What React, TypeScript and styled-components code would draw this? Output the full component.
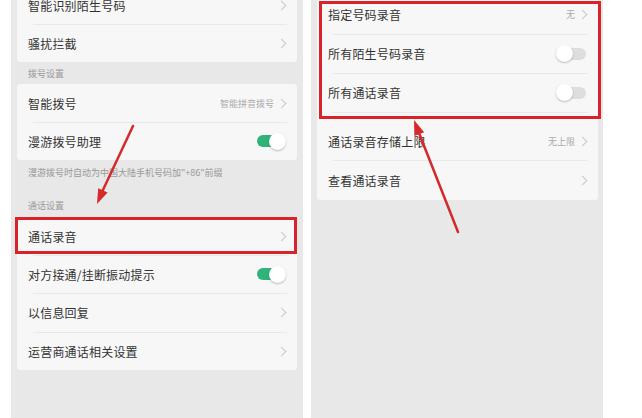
import React from "react";
import styled, { createGlobalStyle } from "styled-components";

const Global = createGlobalStyle`
  html, body { margin: 0; padding: 0; background: #fff; }
  body { font-family: "Noto Sans CJK SC", "Noto Sans", sans-serif; }
`;

const Page = styled.div`
  position: relative;
  width: 642px;
  height: 418px;
  overflow: hidden;
  display: flex;
  background: #fff;
`;

const Phone = styled.div<{ $left: number; $pr: number }>`
  margin-left: ${(p) => p.$left}px;
  width: 292px;
  height: 418px;
  box-sizing: border-box;
  padding: 0 ${(p) => p.$pr}px 0 6px;
  background: #e8e8e8;
  display: flex;
  flex-direction: column;
  overflow: hidden;
`;

const Card = styled.div<{ $mt?: number }>`
  margin-top: ${(p) => p.$mt ?? 0}px;
  background: #f7f7f7;
  border-radius: 3px;
  display: flex;
  flex-direction: column;
`;

const Row = styled.div<{ $h: number; $pt?: number; $divider?: boolean }>`
  position: relative;
  height: ${(p) => p.$h}px;
  box-sizing: border-box;
  padding: ${(p) => p.$pt ?? 0}px 9px 0 11px;
  display: flex;
  align-items: center;
  ${(p) =>
    p.$divider
      ? `&::before { content: ""; position: absolute; top: 0; left: 16px; right: 10px; height: 1px; background: #e9e9e9; }`
      : ""}
`;

const Label = styled.span`
  flex: 1;
  font-size: 12px;
  color: #333;
  letter-spacing: 0.2px;
  white-space: nowrap;
`;

const Value = styled.span`
  font-size: 9px;
  color: #aaa;
  margin-right: 4px;
  white-space: nowrap;
`;

const Chevron = styled.span`
  width: 6px;
  height: 6px;
  border-top: 1px solid #c9c9c9;
  border-right: 1px solid #c9c9c9;
  transform: rotate(45deg);
  margin-right: 3px;
`;

const Track = styled.span<{ $on: boolean }>`
  position: relative;
  width: 31px;
  height: 17px;
  display: flex;
  align-items: center;
  margin-right: 2px;
  &::before {
    content: "";
    width: 28px;
    height: 12px;
    margin-left: 2px;
    border-radius: 6px;
    background: ${(p) => (p.$on ? "#2fb37a" : "#dedede")};
  }
  &::after {
    content: "";
    position: absolute;
    top: 0;
    ${(p) => (p.$on ? "right: 0;" : "left: 0;")}
    width: 17px;
    height: 17px;
    border-radius: 50%;
    background: #fff;
    box-shadow: 0 1px 2px rgba(0, 0, 0, 0.25);
  }
`;

const Section = styled.div<{ $h: number; $pb: number }>`
  height: ${(p) => p.$h}px;
  box-sizing: border-box;
  padding: 0 0 ${(p) => p.$pb}px 11px;
  display: flex;
  align-items: flex-end;
  font-size: 9px;
  color: #9a9a9a;
`;

const Hint = styled.div`
  height: 24px;
  padding-left: 11px;
  display: flex;
  align-items: center;
  font-size: 9px;
  color: #999;
  white-space: nowrap;
`;

const RedBox = styled.div<{ $x: number; $y: number; $w: number; $h: number }>`
  position: absolute;
  left: ${(p) => p.$x}px;
  top: ${(p) => p.$y}px;
  width: ${(p) => p.$w}px;
  height: ${(p) => p.$h}px;
  box-sizing: border-box;
  border: 3px solid #d9232a;
  pointer-events: none;
`;

const Overlay = styled.svg`
  position: absolute;
  left: 0;
  top: 0;
  width: 642px;
  height: 418px;
  pointer-events: none;
`;

type Item = {
  label: string;
  value?: string;
  toggle?: boolean;
  chevron?: boolean;
  h?: number;
  pt?: number;
};

const Rows: React.FC<{ items: Item[] }> = ({ items }) => (
  <>
    {items.map((it, i) => (
      <Row key={it.label} $h={it.h ?? 38} $pt={it.pt} $divider={i > 0}>
        <Label>{it.label}</Label>
        {it.value && <Value>{it.value}</Value>}
        {it.toggle !== undefined && <Track $on={it.toggle} />}
        {it.chevron && <Chevron />}
      </Row>
    ))}
  </>
);

export default function App() {
  return (
    <>
      <Global />
      <Page>
        <Phone $left={11} $pr={6}>
          <Card $mt={-14}>
            <Rows
              items={[
                { label: "智能识别陌生号码", chevron: true },
                { label: "骚扰拦截", chevron: true },
              ]}
            />
          </Card>
          <Section $h={22} $pb={4}>拨号设置</Section>
          <Card>
            <Rows
              items={[
                { label: "智能拨号", value: "智能拼音拨号", chevron: true },
                { label: "漫游拨号助理", toggle: true },
              ]}
            />
          </Card>
          <Hint>漫游拨号时自动为中国大陆手机号码加"+86"前缀</Hint>
          <Section $h={34} $pb={6}>通话设置</Section>
          <Card>
            <Rows
              items={[
                { label: "通话录音", chevron: true, h: 37 },
                { label: "对方接通/挂断振动提示", toggle: true },
                { label: "以信息回复", chevron: true, h: 39 },
                { label: "运营商通话相关设置", chevron: true },
              ]}
            />
          </Card>
        </Phone>
        <Phone $left={8} $pr={5}>
          <Card $mt={-5}>
            <Rows
              items={[
                { label: "指定号码录音", value: "无", chevron: true, h: 39 },
                { label: "所有陌生号码录音", toggle: false, h: 39 },
                { label: "所有通话录音", toggle: false, h: 39 },
                { label: "通话录音存储上限", value: "无上限", chevron: true, h: 48, pt: 10 },
                { label: "查看通话录音", chevron: true, h: 40 },
              ]}
            />
          </Card>
        </Phone>
        <RedBox $x={15} $y={217} $w={282} $h={37} />
        <RedBox $x={319} $y={1} $w={282} $h={118} />
        <Overlay viewBox="0 0 642 418">
          <line x1="133" y1="126" x2="102" y2="192" stroke="#d42a2a" strokeWidth="2.5" strokeLinecap="round" />
          <polygon points="97,204 107.6,192.6 98.2,188.2" fill="#d42a2a" />
          <line x1="458" y1="232" x2="419" y2="133" stroke="#d42a2a" strokeWidth="2.5" strokeLinecap="round" />
          <polygon points="414,120 424.2,132.2 414.4,136" fill="#d42a2a" />
        </Overlay>
      </Page>
    </>
  );
}
